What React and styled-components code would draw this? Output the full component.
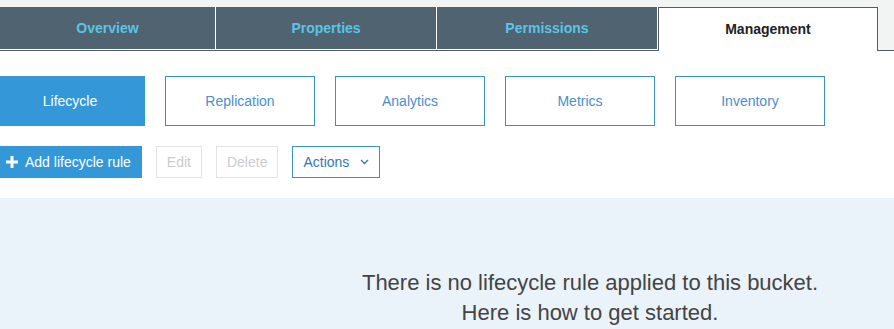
import React from 'react';
import styled, { createGlobalStyle } from 'styled-components';

const GlobalStyle = createGlobalStyle`
  html, body {
    margin: 0;
    padding: 0;
    background: #ffffff;
    font-family: "Liberation Sans", Arial, sans-serif;
  }
`;

const Page = styled.div`
  width: 894px;
  height: 329px;
  overflow: hidden;
  display: flex;
  flex-direction: column;
`;

const TabBar = styled.div`
  display: flex;
  align-items: flex-end;
  padding-top: 7px;
  background: #f2f3f3;
  border-bottom: 1px solid #545b64;
`;

const Tab = styled.div`
  box-sizing: border-box;
  flex: 0 0 ${({ width }) => width}px;
  height: ${({ active }) => (active ? 44 : 43)}px;
  display: flex;
  align-items: center;
  justify-content: center;
  font-size: 14px;
  font-weight: bold;
  background: ${({ active }) => (active ? '#ffffff' : '#4f6370')};
  color: ${({ active }) => (active ? '#222222' : '#5cc3e6')};
  border-right: 1px solid ${({ active }) => (active ? '#545b64' : '#ffffff')};
  border-bottom: ${({ active }) => (active ? 'none' : '1px solid #ffffff')};
  border-top: ${({ active }) => (active ? '1px solid #545b64' : 'none')};
  border-left: ${({ active }) => (active ? '1px solid #545b64' : 'none')};
  margin-bottom: ${({ active }) => (active ? '-1px' : '0')};
  padding-bottom: ${({ active }) => (active ? '1px' : '0')};
`;

const SubTabs = styled.div`
  display: flex;
  gap: 20px;
  margin-top: 25px;
  margin-left: -5px;
`;

const SubTab = styled.div`
  box-sizing: border-box;
  width: 150px;
  height: 50px;
  display: flex;
  align-items: center;
  justify-content: center;
  font-size: 14px;
  border: 1px solid ${({ active }) => (active ? '#3498d8' : '#3d8fc4')};
  background: ${({ active }) => (active ? '#3498d8' : '#ffffff')};
  color: ${({ active }) => (active ? '#ffffff' : '#4a8ecb')};
`;

const Toolbar = styled.div`
  display: flex;
  align-items: center;
  gap: 14px;
  margin-top: 20px;
`;

const Button = styled.div`
  box-sizing: border-box;
  height: 32px;
  display: flex;
  align-items: center;
  gap: ${({ gap }) => gap || 0}px;
  padding: ${({ pad }) => pad || '0 10px'};
  font-size: 14px;
  border: 1px solid ${({ variant }) =>
    variant === 'primary' ? '#3498d8' : variant === 'disabled' ? '#e3e3e3' : '#3d8fc4'};
  background: ${({ variant }) => (variant === 'primary' ? '#3498d8' : '#ffffff')};
  color: ${({ variant }) =>
    variant === 'primary' ? '#ffffff' : variant === 'disabled' ? '#cccccc' : '#3579b3'};
`;

const Panel = styled.div`
  flex: 1;
  margin-top: 20px;
  background: #eaf3f9;
  padding: 70px 0 0 286px;
  text-align: center;
  font-size: 22px;
  line-height: 30px;
  color: #444444;
`;

const PlusIcon = () => (
  <svg width="12" height="12" viewBox="0 0 12 12">
    <path d="M4.5 0h3v4.5H12v3H7.5V12h-3V7.5H0v-3h4.5z" fill="#ffffff" />
  </svg>
);

const Chevron = () => (
  <svg width="9" height="6" viewBox="0 0 9 6">
    <path d="M1 1l3.5 3.5L8 1" fill="none" stroke="#3579b3" strokeWidth="1.3" />
  </svg>
);

const tabs = [
  { label: 'Overview', width: 216 },
  { label: 'Properties', width: 221 },
  { label: 'Permissions', width: 221 },
  { label: 'Management', width: 220, active: true },
];

const subTabs = ['Lifecycle', 'Replication', 'Analytics', 'Metrics', 'Inventory'];

const App = () => (
  <Page>
    <GlobalStyle />
    <TabBar>
      {tabs.map((t) => (
        <Tab key={t.label} width={t.width} active={t.active}>
          {t.label}
        </Tab>
      ))}
    </TabBar>
    <SubTabs>
      {subTabs.map((s, i) => (
        <SubTab key={s} active={i === 0}>
          {s}
        </SubTab>
      ))}
    </SubTabs>
    <Toolbar>
      <Button variant="primary" pad="0 10px 0 5px" gap={7}>
        <PlusIcon />
        Add lifecycle rule
      </Button>
      <Button variant="disabled">Edit</Button>
      <Button variant="disabled">Delete</Button>
      <Button variant="outline" gap={11}>
        Actions
        <Chevron />
      </Button>
    </Toolbar>
    <Panel>
      There is no lifecycle rule applied to this bucket.
      <br />
      Here is how to get started.
    </Panel>
  </Page>
);

export default App;
